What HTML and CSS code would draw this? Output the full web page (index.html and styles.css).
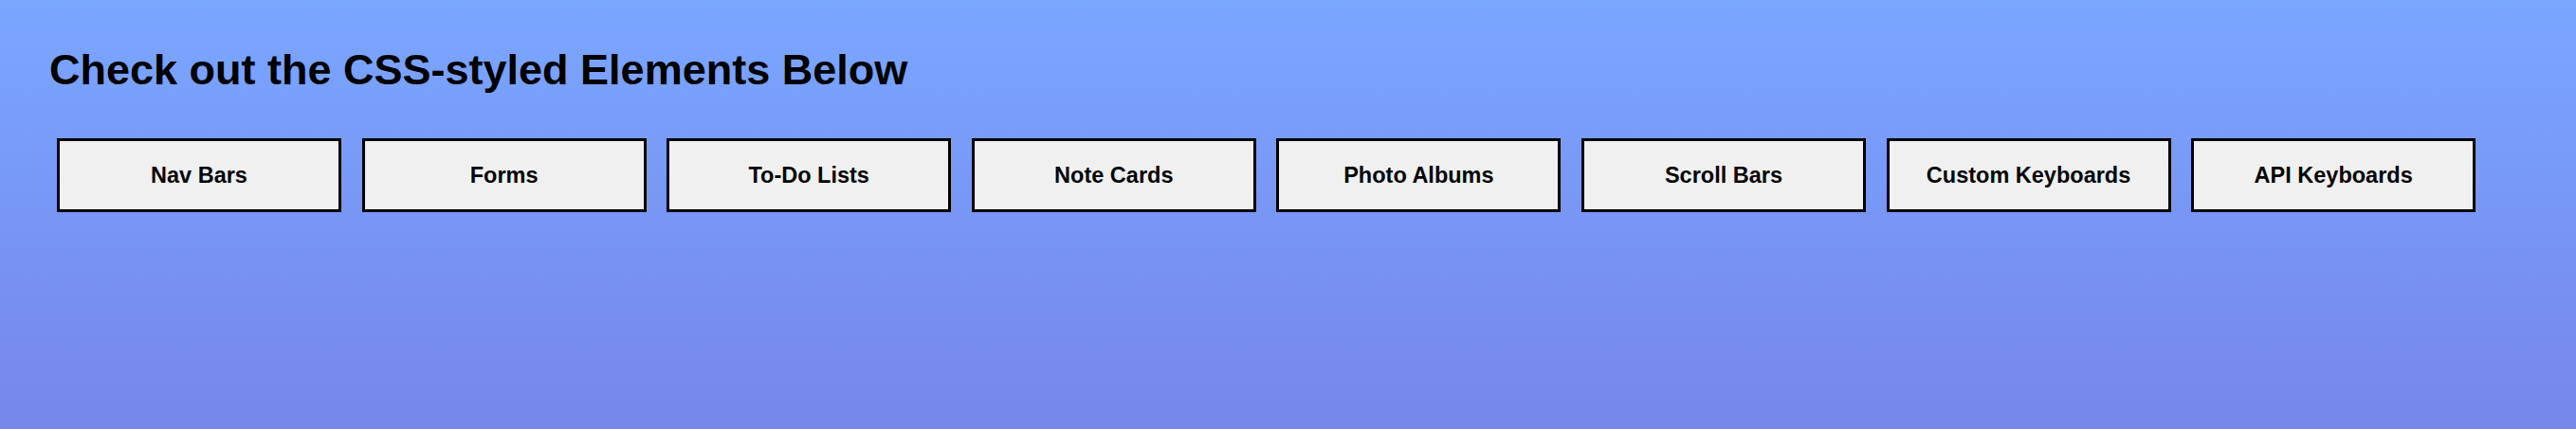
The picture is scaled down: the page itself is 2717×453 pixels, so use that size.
FILE: index.html
```html
<!DOCTYPE html>
<html lang="en">
<head>
<meta charset="utf-8">
<title>CSS-styled Elements</title>
<link rel="stylesheet" href="styles.css">
</head>
<body>
<main class="page">
  <h1 class="title">Check out the CSS-styled Elements Below</h1>
  <nav class="links">
    <a class="link-btn" href="#">Nav Bars</a>
    <a class="link-btn" href="#">Forms</a>
    <a class="link-btn" href="#">To-Do Lists</a>
    <a class="link-btn" href="#">Note Cards</a>
    <a class="link-btn" href="#">Photo Albums</a>
    <a class="link-btn" href="#">Scroll Bars</a>
    <a class="link-btn" href="#">Custom Keyboards</a>
    <a class="link-btn" href="#">API Keyboards</a>
  </nav>
</main>
</body>
</html>
```

FILE: styles.css
```css
html, body {
  margin: 0;
  height: 100%;
}

body {
  background: linear-gradient(to bottom, #7aa7ff 0%, #7686ea 100%);
  font-family: "Liberation Sans", Arial, sans-serif;
  color: #000;
}

.page {
  padding: 48px 0 0 52px;
  display: flex;
  flex-direction: column;
}

.title {
  margin: 0;
  font-size: 45px;
  line-height: 52px;
  font-weight: bold;
}

.links {
  display: flex;
  gap: 21.6px;
  margin-top: 46px;
  padding-left: 8px;
}

.link-btn {
  box-sizing: border-box;
  width: 300px;
  height: 78px;
  flex: none;
  display: flex;
  align-items: center;
  justify-content: center;
  background: #f0f0f0;
  border: 3px solid #000;
  color: #000;
  text-decoration: none;
  font-weight: bold;
  font-size: 23.5px;
}
```
